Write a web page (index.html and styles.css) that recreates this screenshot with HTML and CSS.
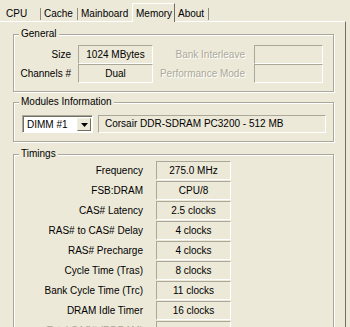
FILE: index.html
```html
<!DOCTYPE html>
<html>
<head>
<meta charset="utf-8">
<title>CPU-Z Memory</title>
<link rel="stylesheet" href="styles.css">
</head>
<body>
<div class="win">
  <div class="tabs">
    <div class="tab t-cpu">CPU</div>
    <div class="tab t-cache">Cache</div>
    <div class="tab t-main">Mainboard</div>
    <div class="tab t-mem active">Memory</div>
    <div class="tab t-about">About</div>
  </div>
  <div class="panel">
    <fieldset class="group general">
      <legend>General</legend>
      <div class="grid4">
        <span class="lbl">Size</span>
        <span class="field">1024 MBytes</span>
        <span class="lbl lbl2 dis">Bank Interleave</span>
        <span class="field"></span>
        <span class="lbl">Channels #</span>
        <span class="field">Dual</span>
        <span class="lbl lbl2 dis">Performance Mode</span>
        <span class="field"></span>
      </div>
    </fieldset>
    <fieldset class="group modules">
      <legend>Modules Information</legend>
      <div class="modrow">
        <div class="combo">
          <span class="combo-text">DIMM #1</span>
          <span class="combo-btn"><svg width="7" height="4" viewBox="0 0 7 4"><path d="M0 0h7L3.5 4z" fill="#000"/></svg></span>
        </div>
        <span class="field wide">Corsair DDR-SDRAM PC3200 - 512 MB</span>
      </div>
    </fieldset>
    <fieldset class="group timings">
      <legend>Timings</legend>
      <div class="grid2">
        <span class="lbl">Frequency</span><span class="field">275.0 MHz</span>
        <span class="lbl">FSB:DRAM</span><span class="field">CPU/8</span>
        <span class="lbl">CAS# Latency</span><span class="field">2.5 clocks</span>
        <span class="lbl">RAS# to CAS# Delay</span><span class="field">4 clocks</span>
        <span class="lbl">RAS# Precharge</span><span class="field">4 clocks</span>
        <span class="lbl">Cycle Time (Tras)</span><span class="field">8 clocks</span>
        <span class="lbl">Bank Cycle Time (Trc)</span><span class="field">11 clocks</span>
        <span class="lbl">DRAM Idle Timer</span><span class="field">16 clocks</span>
        <span class="lbl dis">Total CAS# (RDRAM)</span><span class="field"></span>
      </div>
    </fieldset>
  </div>
</div>
</body>
</html>
```

FILE: styles.css
```css
html, body {
  margin: 0;
  padding: 0;
}
body {
  background: #ece9d8;
  font-family: "Liberation Sans", Arial, sans-serif;
  font-size: 10px;
  color: #000;
  width: 350px;
  height: 327px;
  overflow: hidden;
}
.win {
  width: 346px;
}
.tabs {
  display: flex;
  height: 21px;
  align-items: flex-end;
  position: relative;
  z-index: 2;
}
.tab {
  position: relative;
  box-sizing: border-box;
  height: 21px;
  line-height: 12px;
  padding: 8px 0 0 6px;
}
.tab::after {
  content: "";
  position: absolute;
  right: 0;
  top: 8px;
  width: 1px;
  height: 12px;
  background: #8e8c80;
}
.t-cpu { width: 41px; }
.t-cache { width: 37px; padding-left: 3px; }
.t-main { width: 54px; padding-left: 3px; }
.t-main::after { display: none; }
.t-mem { width: 43px; }
.t-about { width: 34px; padding-left: 3px; }
.tab.active {
  height: 19px;
  margin-bottom: -1px;
  padding: 4px 0 0 3px;
  border-top: 1px solid #fff;
  border-left: 1px solid #fff;
  border-right: 1px solid #716f64;
  background: #ece9d8;
}
.tab.active::after { display: none; }
.panel {
  border-top: 1px solid #fff;
  border-right: 1px solid #716f64;
  height: 320px;
  box-sizing: border-box;
  padding-top: 1px;
}
.group {
  margin: 0 11px 0 13px;
  padding: 0;
  border: 1px solid #aca899;
  box-shadow: inset 1px 1px 0 #fff, 1px 1px 0 #fff;
  min-width: 0;
}
.group legend {
  margin-left: 5px;
  padding: 0 2px;
  line-height: 12px;
  background: #ece9d8;
}
.general { margin-top: 5px; padding: 5px 0 8px; }
.modules { margin-top: 4px; padding: 7px 0 8px; }
.timings { margin-top: 6px; padding: 1px 0 0; }
.grid4 {
  display: grid;
  grid-template-columns: 64px 75px 101px 69px;
  grid-auto-rows: 19px;
}
.grid2 {
  display: grid;
  grid-template-columns: 142px 75px;
  grid-auto-rows: 19px;
  row-gap: 1px;
}
.lbl {
  text-align: right;
  padding-right: 7px;
  line-height: 19px;
  white-space: nowrap;
}
.lbl2 { padding-right: 9px; }
.grid2 .lbl { padding-right: 13px; }
.dis {
  color: #aca899;
  text-shadow: 1px 1px 0 #fff;
}
.field {
  box-sizing: border-box;
  height: 19px;
  border-top: 1px solid #aca899;
  border-left: 1px solid #aca899;
  border-bottom: 1px solid #fff;
  border-right: 1px solid #fff;
  text-align: center;
  line-height: 17px;
  white-space: nowrap;
}
.modrow {
  display: flex;
  gap: 5px;
  padding-left: 8px;
}
.combo {
  box-sizing: border-box;
  width: 71px;
  height: 18px;
  display: flex;
  background: #fff;
  border-top: 1px solid #aca899;
  border-left: 1px solid #aca899;
  border-bottom: 1px solid #fff;
  border-right: 1px solid #fff;
  box-shadow: inset 1px 1px 0 #716f64;
  padding: 2px 1px 1px 2px;
}
.combo-text {
  flex: 1;
  line-height: 13px;
  padding-left: 2px;
}
.combo-btn {
  box-sizing: border-box;
  width: 14px;
  height: 13px;
  background: #ece9d8;
  border-top: 1px solid #f1efe2;
  border-left: 1px solid #f1efe2;
  border-right: 1px solid #716f64;
  border-bottom: 1px solid #716f64;
  display: flex;
  align-items: center;
  justify-content: center;
}
.field.wide {
  width: 228px;
  height: 18px;
  line-height: 16px;
  text-align: left;
  padding-left: 6px;
}
```
